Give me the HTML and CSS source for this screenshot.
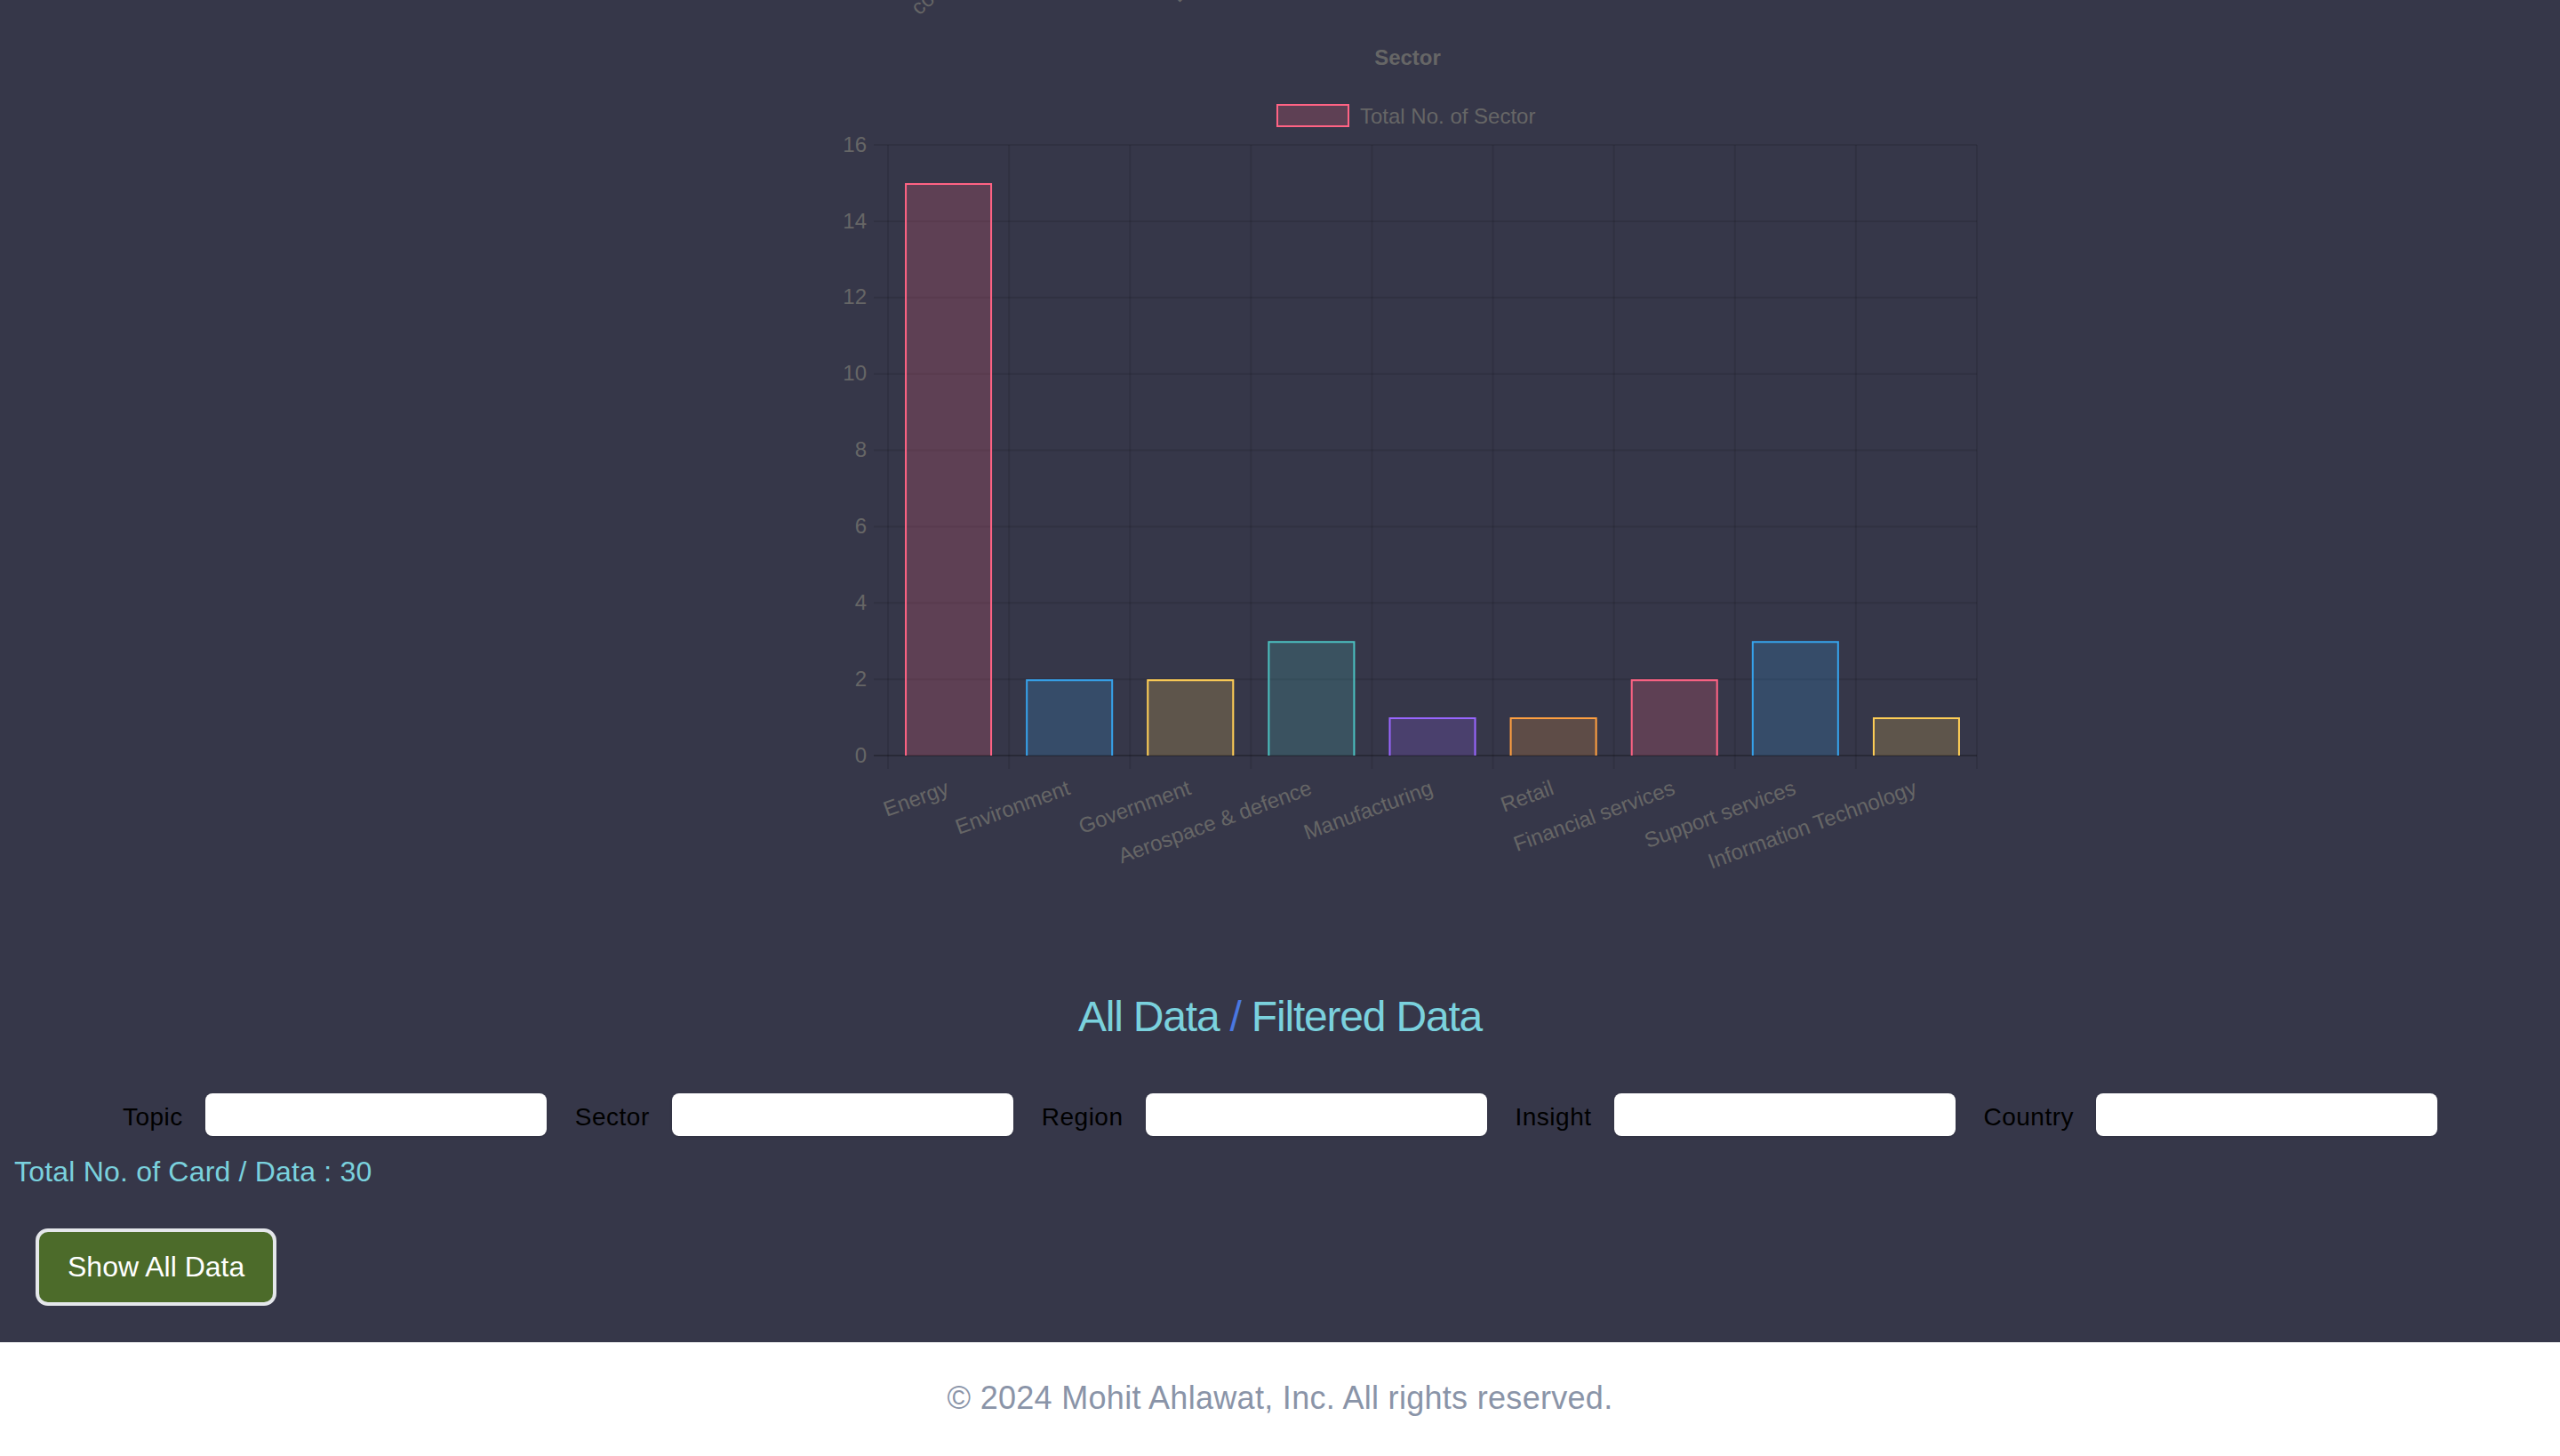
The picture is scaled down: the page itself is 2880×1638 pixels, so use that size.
FILE: index.html
```html
<!DOCTYPE html>
<html lang="en">
<head>
<meta charset="utf-8">
<title>Dashboard</title>
<link rel="stylesheet" href="styles.css">
</head>
<body>
<main class="dashboard">
  <section class="chart-wrap">
    <svg class="chart" viewBox="0 0 2880 1040" width="2880" height="1040" xmlns="http://www.w3.org/2000/svg">
      <!-- tail of previous chart's rotated labels -->
      <text class="tick" x="1034" y="18" transform="rotate(-42 1034 18)">coal</text>
      <text class="tick" x="1326" y="4" transform="rotate(-45 1326 4)">Biomass</text>

      <text class="chart-title" x="1583.5" y="72.7">Sector</text>

      <rect class="fill-pink stroke-pink" x="1437" y="118" width="80" height="24" stroke-width="2"/>
      <text class="legend-text" x="1530" y="139">Total No. of Sector</text>

      <g class="grid">
        <line x1="983" y1="163" x2="2224" y2="163"/>
        <line x1="983" y1="248.875" x2="2224" y2="248.875"/>
        <line x1="983" y1="334.75" x2="2224" y2="334.75"/>
        <line x1="983" y1="420.625" x2="2224" y2="420.625"/>
        <line x1="983" y1="506.5" x2="2224" y2="506.5"/>
        <line x1="983" y1="592.375" x2="2224" y2="592.375"/>
        <line x1="983" y1="678.25" x2="2224" y2="678.25"/>
        <line x1="983" y1="764.125" x2="2224" y2="764.125"/>
        <line x1="999" y1="163" x2="999" y2="865"/>
        <line x1="1135.11" y1="163" x2="1135.11" y2="865"/>
        <line x1="1271.22" y1="163" x2="1271.22" y2="865"/>
        <line x1="1407.33" y1="163" x2="1407.33" y2="865"/>
        <line x1="1543.44" y1="163" x2="1543.44" y2="865"/>
        <line x1="1679.56" y1="163" x2="1679.56" y2="865"/>
        <line x1="1815.67" y1="163" x2="1815.67" y2="865"/>
        <line x1="1951.78" y1="163" x2="1951.78" y2="865"/>
        <line x1="2087.89" y1="163" x2="2087.89" y2="865"/>
        <line x1="2224" y1="163" x2="2224" y2="865"/>
      </g>
      <line class="zero-line" x1="983" y1="850" x2="2224" y2="850"/>

      <g class="y-ticks">
        <text x="975" y="170.6">16</text>
        <text x="975" y="256.5">14</text>
        <text x="975" y="342.4">12</text>
        <text x="975" y="428.2">10</text>
        <text x="975" y="514.1">8</text>
        <text x="975" y="600">6</text>
        <text x="975" y="685.9">4</text>
        <text x="975" y="771.7">2</text>
        <text x="975" y="857.6">0</text>
      </g>

      <g class="bars">
        <rect class="fill-pink" x="1018.06" y="205.94" width="98" height="644.06"/>
        <path class="stroke-pink" d="M1019.06 850V206.94H1115.06V850"/>
        <rect class="fill-blue" x="1154.17" y="764.13" width="98" height="85.87"/>
        <path class="stroke-blue" d="M1155.17 850V765.13H1251.17V850"/>
        <rect class="fill-yellow" x="1290.28" y="764.13" width="98" height="85.87"/>
        <path class="stroke-yellow" d="M1291.28 850V765.13H1387.28V850"/>
        <rect class="fill-teal" x="1426.39" y="721.19" width="98" height="128.81"/>
        <path class="stroke-teal" d="M1427.39 850V722.19H1523.39V850"/>
        <rect class="fill-purple" x="1562.5" y="807.06" width="98" height="42.94"/>
        <path class="stroke-purple" d="M1563.5 850V808.06H1659.5V850"/>
        <rect class="fill-orange" x="1698.61" y="807.06" width="98" height="42.94"/>
        <path class="stroke-orange" d="M1699.61 850V808.06H1795.61V850"/>
        <rect class="fill-pink" x="1834.72" y="764.13" width="98" height="85.87"/>
        <path class="stroke-pink" d="M1835.72 850V765.13H1931.72V850"/>
        <rect class="fill-blue" x="1970.83" y="721.19" width="98" height="128.81"/>
        <path class="stroke-blue" d="M1971.83 850V722.19H2067.83V850"/>
        <rect class="fill-yellow" x="2106.94" y="807.06" width="98" height="42.94"/>
        <path class="stroke-yellow" d="M2107.94 850V808.06H2203.94V850"/>
      </g>

      <g class="x-ticks">
        <text x="1069.06" y="893" transform="rotate(-20 1069.06 893)">Energy</text>
        <text x="1205.17" y="893" transform="rotate(-20 1205.17 893)">Environment</text>
        <text x="1341.28" y="893" transform="rotate(-20 1341.28 893)">Government</text>
        <text x="1477.39" y="893" transform="rotate(-20 1477.39 893)">Aerospace &amp; defence</text>
        <text x="1613.5" y="893" transform="rotate(-20 1613.5 893)">Manufacturing</text>
        <text x="1749.61" y="893" transform="rotate(-20 1749.61 893)">Retail</text>
        <text x="1885.72" y="893" transform="rotate(-20 1885.72 893)">Financial services</text>
        <text x="2021.83" y="893" transform="rotate(-20 2021.83 893)">Support services</text>
        <text x="2157.94" y="893" transform="rotate(-20 2157.94 893)">Information Technology</text>
      </g>
    </svg>
  </section>

  <h2 class="data-title">All Data <span class="slash">/</span> Filtered Data</h2>

  <div class="filters">
    <label class="filter"><span class="filter-label">Topic</span><input class="filter-input" type="text"></label>
    <label class="filter"><span class="filter-label">Sector</span><input class="filter-input" type="text"></label>
    <label class="filter"><span class="filter-label">Region</span><input class="filter-input" type="text"></label>
    <label class="filter"><span class="filter-label">Insight</span><input class="filter-input" type="text"></label>
    <label class="filter"><span class="filter-label">Country</span><input class="filter-input" type="text"></label>
  </div>

  <p class="total">Total No. of Card / Data : 30</p>

  <button class="show-all" type="button">Show All Data</button>
</main>
<footer class="site-footer">© 2024 Mohit Ahlawat, Inc. All rights reserved.</footer>
</body>
</html>
```
FILE: styles.css
```css
html, body {
  margin: 0;
  padding: 0;
  background: #ffffff;
}

body {
  font-family: "Liberation Sans", Arial, Helvetica, sans-serif;
}

.dashboard {
  background: #363749;
  padding: 0 16px 41px;
}

.chart-wrap {
  margin: 0 -16px;
}

.chart {
  display: block;
  width: 2880px;
  height: 1040px;
  font-family: "Liberation Sans", Arial, Helvetica, sans-serif;
}

.tick,
.y-ticks text,
.x-ticks text,
.legend-text {
  font-size: 24px;
  fill: #666666;
}

.y-ticks text,
.x-ticks text {
  text-anchor: end;
}

.chart-title {
  font-size: 24px;
  font-weight: bold;
  fill: #666666;
  text-anchor: middle;
}

.grid line {
  stroke: rgba(0, 0, 0, 0.1);
  stroke-width: 2;
}

.zero-line {
  stroke: rgba(0, 0, 0, 0.25);
  stroke-width: 2;
}

.bars path {
  fill: none;
  stroke-width: 2;
}

.fill-pink { fill: rgba(255, 99, 132, 0.2); }
.fill-blue { fill: rgba(54, 162, 235, 0.2); }
.fill-yellow { fill: rgba(255, 206, 86, 0.2); }
.fill-teal { fill: rgba(75, 192, 192, 0.2); }
.fill-purple { fill: rgba(153, 102, 255, 0.2); }
.fill-orange { fill: rgba(255, 159, 64, 0.2); }

.stroke-pink { stroke: rgb(255, 99, 132); }
.stroke-blue { stroke: rgb(54, 162, 235); }
.stroke-yellow { stroke: rgb(255, 206, 86); }
.stroke-teal { stroke: rgb(75, 192, 192); }
.stroke-purple { stroke: rgb(153, 102, 255); }
.stroke-orange { stroke: rgb(255, 159, 64); }

.data-title {
  margin: 68px 0 50px;
  font-size: 48px;
  line-height: 72px;
  font-weight: normal;
  letter-spacing: -1.2px;
  text-align: center;
  color: #7ad1dd;
}

.slash {
  color: #4a78e0;
}

.filters {
  display: flex;
  justify-content: center;
  align-items: center;
  gap: 32px;
}

.filter {
  display: flex;
  align-items: center;
  gap: 25px;
}

.filter-label {
  font-size: 28px;
  letter-spacing: 0.5px;
  color: #000000;
  padding-top: 6px;
}

.filter-input {
  box-sizing: border-box;
  width: 384px;
  height: 48px;
  margin: 0;
  border: 0;
  border-radius: 8px;
  background: #ffffff;
  box-shadow: 0 1px 3px rgba(0, 0, 0, 0.12);
  padding: 0 16px;
  font-family: inherit;
  font-size: 28px;
}

.total {
  margin: 16px 0 0;
  font-size: 32px;
  line-height: 48px;
  letter-spacing: 0.2px;
  color: #7ad1dd;
}

.show-all {
  display: block;
  margin: 40px 0 0 24px;
  padding: 16px 32px;
  border: 4px solid #e5e7eb;
  border-radius: 14px;
  background: #4c6b2a;
  color: #ffffff;
  font-family: inherit;
  font-size: 32px;
  line-height: 47px;
}

.site-footer {
  background: #ffffff;
  padding: 36px 0;
  font-size: 36px;
  line-height: 54px;
  letter-spacing: 0.3px;
  text-align: center;
  color: #8a94a8;
}
```
